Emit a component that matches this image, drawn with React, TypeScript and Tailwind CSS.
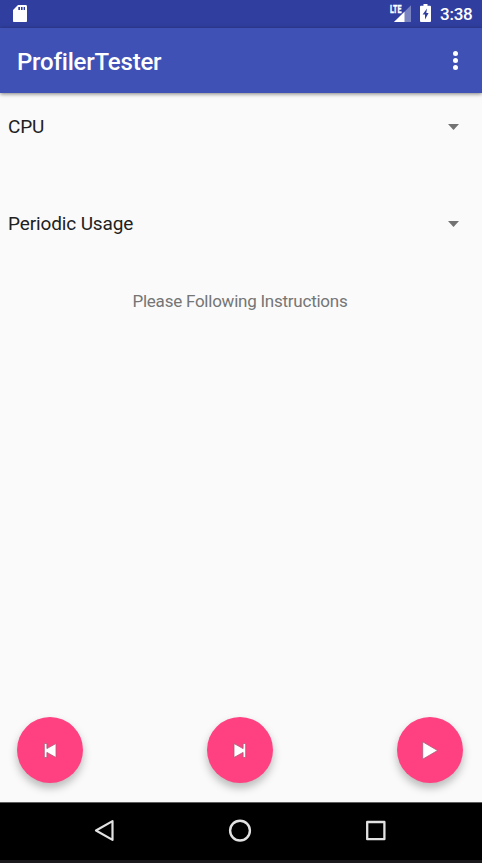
import type { ReactNode } from "react";

function StatusBar() {
  return (
    <div className="flex h-7 items-start bg-[#303f9f] pl-[13px] text-white">
      <svg className="mt-[5px] h-[17px] w-[14px]" viewBox="0 0 14 17" fill="currentColor">
        <path
          fillRule="evenodd"
          d="M5 0H12.6Q14 0 14 1.4V16Q14 17.2 12.6 17.2H1.4Q0 17.2 0 16V5ZM5.3 2V5H7V2ZM8 2V5H9.6V2ZM10.6 2V5H12V2Z"
        />
      </svg>
      <svg className="mt-1 ml-[362px] h-[19px] w-[23px]" viewBox="0 0 23 19">
        <path d="M22 1.3V18H5Z" fill="#7983c1" />
        <path d="M15.5 7.7V18H5L15.5 7.7Z" fill="white" />
        <path d="M0 0H13V9.6H0Z" fill="#303f9f" />
        <text
          x="1"
          y="9"
          fill="white"
          stroke="white"
          strokeWidth="0.4"
          fontFamily="Roboto, sans-serif"
          fontSize="11"
          fontWeight="700"
          textLength="11.5"
          lengthAdjust="spacingAndGlyphs"
        >
          LTE
        </text>
      </svg>
      <svg className="mt-1 ml-2 h-[18px] w-[11px]" viewBox="0 0 11 18" fill="currentColor">
        <path
          fillRule="evenodd"
          d="M3.5 0H7.5V1.7H10Q11 1.7 11 2.7V17Q11 18 10 18H1Q0 18 0 17V2.7Q0 1.7 1 1.7H3.5ZM7 4.5L2.6 10.4H5V15.4L8.6 8.9H6.3Z"
        />
      </svg>
      <span className="mt-[4px] ml-[9px] text-[17px] leading-5 font-medium tracking-[-0.25px]">3:38</span>
    </div>
  );
}

function AppBar() {
  return (
    <header className="z-10 flex h-[65px] items-center justify-between bg-[#3f51b5] pr-[24px] pl-[17px] text-white shadow-[0_1px_4px_rgba(0,0,0,0.5)]">
      <h1 className="mt-[3px] text-[24px] leading-7 font-medium tracking-[-0.2px]">ProfilerTester</h1>
      <div className="flex flex-col gap-[2px]">
        <span className="size-[5px] rounded-full bg-white" />
        <span className="size-[5px] rounded-full bg-white" />
        <span className="size-[5px] rounded-full bg-white" />
      </div>
    </header>
  );
}

function Spinner({ label }: { label: string }) {
  return (
    <div className="flex h-8 items-center justify-between pr-[23px] pl-2">
      <span className="text-[19px] leading-8 tracking-[-0.13px] text-[#212121]">{label}</span>
      <svg className="h-[6px] w-[11px]" viewBox="0 0 11 6">
        <path d="M0 0H11L5.5 6Z" fill="#737373" />
      </svg>
    </div>
  );
}

function Fab({ label, children }: { label: string; children: ReactNode }) {
  return (
    <button
      aria-label={label}
      className="flex size-[66px] items-center justify-center rounded-full bg-[#ff4081] shadow-[0_5px_9px_rgba(0,0,0,0.26)]"
    >
      <svg className="size-6" viewBox="0 -0.5 24 24" fill="white" stroke="#b05878" strokeWidth="0.8">
        {children}
      </svg>
    </button>
  );
}

function NavBar() {
  return (
    <nav className="flex h-[61px] flex-col border-t border-b-[3px] border-t-[#5c5f5e] border-b-[#1b191b] bg-black">
      <div className="flex h-[55px] items-center justify-between pr-[95px] pl-[93px]">
        <svg className="size-6" viewBox="0 0 24 24" fill="none" stroke="#e2e2e2" strokeWidth="2.2" strokeLinejoin="round">
          <path d="M19.5 2.1V20.9L3 11.5Z" />
        </svg>
        <svg className="size-6" viewBox="0 0 24 24" fill="none" stroke="#e2e2e2" strokeWidth="2.4">
          <circle cx="12" cy="11.6" r="9.9" />
        </svg>
        <svg className="size-6" viewBox="0 0 24 24" fill="none" stroke="#e2e2e2" strokeWidth="2.3" strokeLinejoin="round">
          <path d="M4.2 3H21.4V20.2H4.2Z" />
        </svg>
      </div>
    </nav>
  );
}

export default function App() {
  return (
    <div className="flex h-[863px] w-[482px] flex-col overflow-hidden bg-[#fafafa] font-[Roboto,sans-serif]">
      <StatusBar />
      <AppBar />
      <main className="flex flex-1 flex-col pt-[18px]">
        <Spinner label="CPU" />
        <div className="h-[65px]" />
        <Spinner label="Periodic Usage" />
        <p className="mt-[49px] pr-[2px] text-center text-[17px] leading-6 tracking-[-0.24px] text-[#757575]">
          Please Following Instructions
        </p>
        <div className="mt-auto mb-[19px] flex justify-between pr-[19px] pl-[17px]">
          <Fab label="Previous">
            <path d="M6.3 5H8.9V10.1L18 5V19L8.9 13.9V19H6.3Z" />
          </Fab>
          <Fab label="Next">
            <path d="M17.7 5H15.1V10.1L6 5V19L15.1 13.9V19H17.7Z" />
          </Fab>
          <Fab label="Play">
            <path d="M4.7 3.3V20.7L19.6 12Z" />
          </Fab>
        </div>
      </main>
      <NavBar />
    </div>
  );
}
